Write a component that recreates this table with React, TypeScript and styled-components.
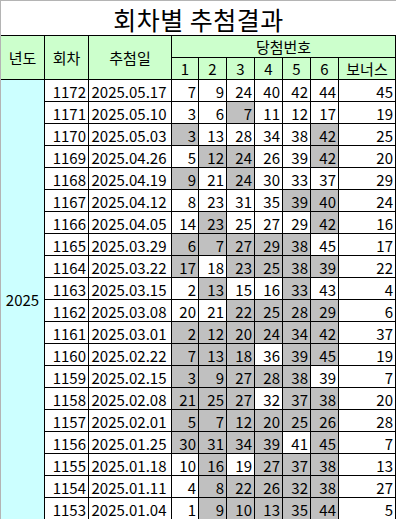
import React from "react";
import styled, { createGlobalStyle } from "styled-components";

// "*" marks a number shown on a grey cell
const draws: [number, string, string][] = [
  [1172, "2025.05.17", "7 9 24 40 42 44 45"],
  [1171, "2025.05.10", "3 6 *7 11 12 17 19"],
  [1170, "2025.05.03", "*3 13 28 34 38 *42 25"],
  [1169, "2025.04.26", "5 *12 *24 26 39 *42 20"],
  [1168, "2025.04.19", "*9 21 *24 30 33 37 29"],
  [1167, "2025.04.12", "8 23 31 35 *39 *40 24"],
  [1166, "2025.04.05", "14 *23 25 27 29 *42 16"],
  [1165, "2025.03.29", "*6 *7 *27 *29 *38 45 17"],
  [1164, "2025.03.22", "*17 18 *23 *25 *38 *39 22"],
  [1163, "2025.03.15", "2 *13 15 16 *33 43 4"],
  [1162, "2025.03.08", "20 21 *22 *25 *28 *29 6"],
  [1161, "2025.03.01", "*2 *12 *20 *24 *34 *42 37"],
  [1160, "2025.02.22", "*7 *13 *18 36 *39 *45 19"],
  [1159, "2025.02.15", "*3 *9 *27 *28 *38 39 7"],
  [1158, "2025.02.08", "*21 *25 *27 32 *37 *38 20"],
  [1157, "2025.02.01", "*5 *7 *12 *20 *25 *26 28"],
  [1156, "2025.01.25", "*30 *31 *34 *39 41 *45 7"],
  [1155, "2025.01.18", "10 *16 19 *27 *37 *38 13"],
  [1154, "2025.01.11", "4 *8 *22 *26 *32 *38 27"],
  [1153, "2025.01.04", "1 *9 *10 *13 *35 *44 5"],
];

const GlobalStyle = createGlobalStyle`
  html, body {
    margin: 0;
    background: #ffffff;
    overflow: hidden;
  }
  body {
    font-family: "Noto Sans CJK KR", "Noto Sans", sans-serif;
    color: #000000;
  }
`;

const Frame = styled.div`
  width: 395px;
  height: 519px;
  border-top: 1px solid #b4b4b4;
  border-left: 1px solid #b4b4b4;
  overflow: hidden;
`;

const Title = styled.h1`
  margin: 0;
  height: 34px;
  display: flex;
  align-items: center;
  justify-content: center;
  padding-top: 1px;
  box-sizing: border-box;
  font-size: 25px;
  font-weight: 400;
  letter-spacing: 0.5px;
`;

const Sheet = styled.div`
  display: grid;
  grid-template-columns: 43px 43px 82px 26px 27px 27px 27px 27px 27px 56px;
  grid-auto-rows: 21px;
  gap: 1px;
  width: fit-content;
  background: #000000;
  border-top: 1px solid #000000;
  border-right: 1px solid #000000;
`;

const Head = styled.div<{ $rows?: number; $cols?: number }>`
  grid-row: span ${(p) => p.$rows ?? 1};
  grid-column: span ${(p) => p.$cols ?? 1};
  background: #ccffcc;
  display: flex;
  align-items: center;
  justify-content: center;
  font-size: 15px;
`;

const Year = styled.div<{ $rows: number }>`
  grid-row: span ${(p) => p.$rows};
  background: #ccffff;
  display: flex;
  align-items: center;
  justify-content: center;
  font-size: 15px;
`;

const Cell = styled.div<{ $center?: boolean; $grey?: boolean }>`
  background: ${(p) => (p.$grey ? "#c0c0c0" : "#ffffff")};
  display: flex;
  align-items: center;
  justify-content: ${(p) => (p.$center ? "center" : "flex-end")};
  padding: 1px 2px 0 0;
  font-size: 15px;
  white-space: nowrap;
`;

export default function App() {
  return (
    <Frame>
      <GlobalStyle />
      <Title>회차별 추첨결과</Title>
      <Sheet>
        <Head $rows={2}>년도</Head>
        <Head $rows={2}>회차</Head>
        <Head $rows={2}>추첨일</Head>
        <Head $cols={7}>당첨번호</Head>
        {["1", "2", "3", "4", "5", "6", "보너스"].map((h) => (
          <Head key={h}>{h}</Head>
        ))}
        <Year $rows={draws.length}>2025</Year>
        {draws.map(([round, date, nums]) => (
          <React.Fragment key={round}>
            <Cell>{round}</Cell>
            <Cell $center>{date}</Cell>
            {nums.split(" ").map((n, i) => (
              <Cell key={i} $grey={n.startsWith("*")}>
                {n.replace("*", "")}
              </Cell>
            ))}
          </React.Fragment>
        ))}
      </Sheet>
    </Frame>
  );
}
